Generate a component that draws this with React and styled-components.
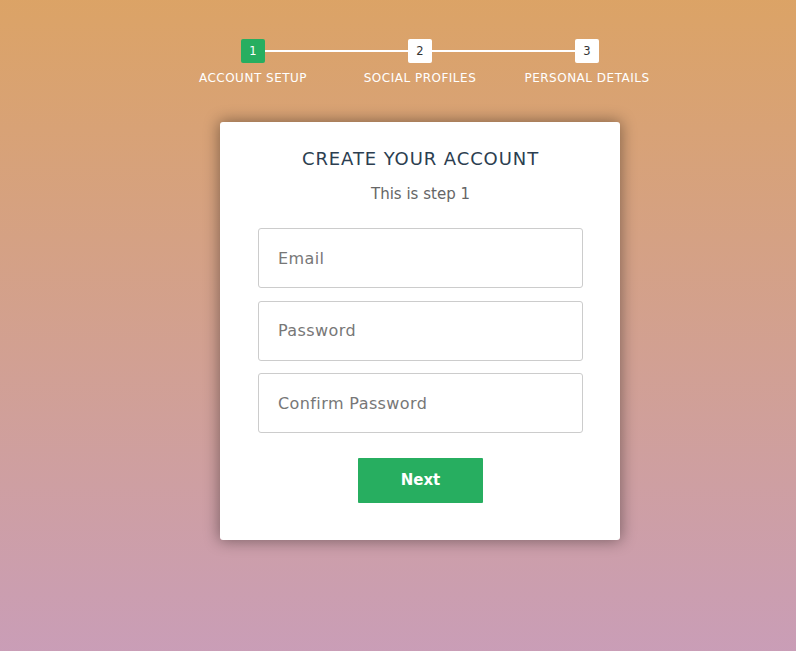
import React from "react";
import styled, { createGlobalStyle } from "styled-components";

const Global = createGlobalStyle`
  html, body {
    margin: 0;
    padding: 0;
  }
  body {
    min-height: 100vh;
    overflow: hidden;
    font-family: "DejaVu Sans", "Open Sans", sans-serif;
    background-color: #c89ec0;
    background-image: linear-gradient(rgba(196, 102, 0, 0.6), rgba(155, 89, 182, 0.6)),
      linear-gradient(#fff, #fff);
    background-size: 100% 880px;
    background-repeat: no-repeat;
  }
`;

const Page = styled.div`
  display: flex;
  flex-direction: column;
  align-items: center;
  box-sizing: border-box;
  padding: 39px 0 0 44px;
  width: 796px;
`;

const Progress = styled.ol`
  list-style: none;
  margin: 0;
  padding: 0;
  display: flex;
  width: 501px;
`;

const Step = styled.li`
  position: relative;
  flex: 1;
  display: flex;
  flex-direction: column;
  align-items: center;
  gap: 8px;
  color: #fff;
  font-size: 12px;
  text-transform: uppercase;

  &:not(:first-child)::before {
    content: "";
    position: absolute;
    top: 11px;
    right: 50%;
    width: 100%;
    height: 2px;
    background: #fff;
    z-index: 0;
  }
`;

const Badge = styled.span`
  position: relative;
  z-index: 1;
  width: 24px;
  height: 24px;
  border-radius: 2px;
  display: flex;
  align-items: center;
  justify-content: center;
  font-size: 11.5px;
  background: ${(p) => (p.$active ? "#27ae60" : "#fff")};
  color: ${(p) => (p.$active ? "#fff" : "#333")};
`;

const Label = styled.span`
  white-space: nowrap;
  letter-spacing: 0.5px;
`;

const Card = styled.form`
  margin-top: 37px;
  width: 400px;
  box-sizing: border-box;
  background: #fff;
  border-radius: 3px;
  box-shadow: 0 0 15px 1px rgba(0, 0, 0, 0.4);
  padding: 26px 37px 37px 38px;
  display: flex;
  flex-direction: column;
  align-items: center;
`;

const Title = styled.h2`
  margin: 0;
  font-size: 18px;
  font-weight: normal;
  letter-spacing: 0.9px;
  color: #2c3e50;
  line-height: 22px;
`;

const Subtitle = styled.h3`
  margin: 14px 0 24px;
  font-size: 15px;
  font-weight: normal;
  color: #666;
  line-height: 20px;
`;

const Field = styled.input`
  width: 100%;
  box-sizing: border-box;
  height: 60px;
  padding: 0 19px;
  margin-bottom: 12.5px;
  border: 1px solid #ccc;
  border-radius: 3px;
  font-family: inherit;
  font-size: 16px;
  letter-spacing: 0.4px;
  color: #2c3e50;
  &::placeholder {
    color: #777;
  }
`;

const NextButton = styled.button`
  margin-top: 12px;
  width: 125px;
  height: 45px;
  border: 0;
  border-radius: 1px;
  background: #27ae60;
  color: #fff;
  font-family: inherit;
  font-weight: bold;
  font-size: 15px;
  cursor: pointer;
`;

const steps = ["Account Setup", "Social Profiles", "Personal Details"];

export default function App() {
  return (
    <>
      <Global />
      <Page>
        <Progress>
          {steps.map((s, i) => (
            <Step key={s}>
              <Badge $active={i === 0}>{i + 1}</Badge>
              <Label>{s}</Label>
            </Step>
          ))}
        </Progress>
        <Card onSubmit={(e) => e.preventDefault()}>
          <Title>CREATE YOUR ACCOUNT</Title>
          <Subtitle>This is step 1</Subtitle>
          <Field type="text" placeholder="Email" />
          <Field type="password" placeholder="Password" />
          <Field type="password" placeholder="Confirm Password" />
          <NextButton type="submit">Next</NextButton>
        </Card>
      </Page>
    </>
  );
}
